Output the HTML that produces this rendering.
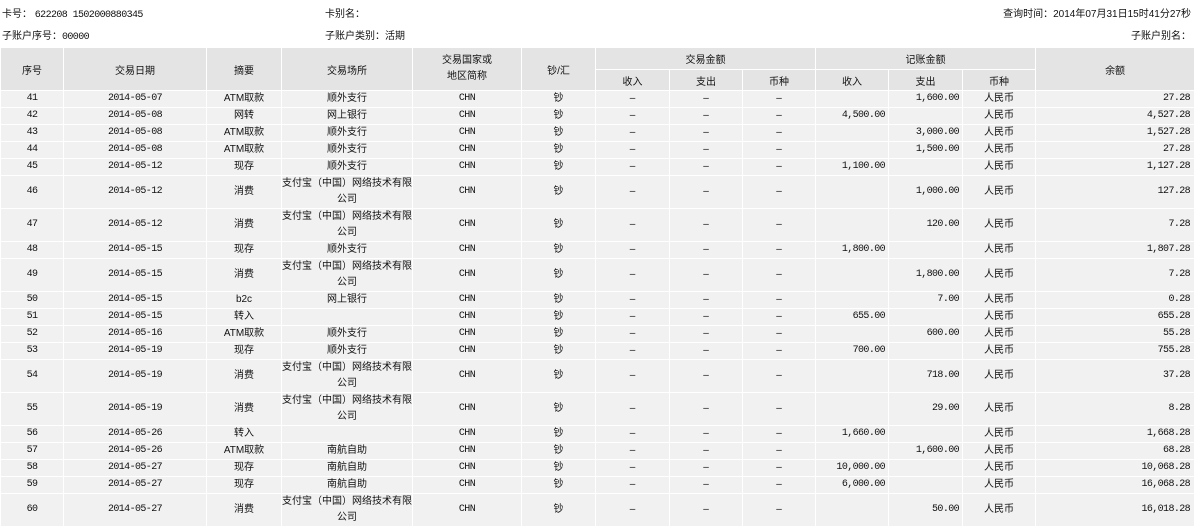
<!DOCTYPE html>
<html><head><meta charset="utf-8"><style>
body{margin:0;background:#fff;width:1194px;height:525px;overflow:hidden;font-family:"Liberation Sans","Noto Sans CJK SC","WenQuanYi Zen Hei",sans-serif;font-size:10px;color:#111}
.top{position:absolute;font-size:10px;white-space:nowrap}
table{position:absolute;left:0;top:47px;border-collapse:collapse;table-layout:fixed;width:1194px}
td,th{border:1px solid #fff;padding:0;text-align:center;font-weight:normal;overflow:hidden;white-space:nowrap}
th{background:#e4e4e4;font-size:10px}
td{background:#f1f1f1;height:16px;line-height:16px}
td.t{height:32px;line-height:16px}
.m{font-family:"Liberation Mono",monospace;font-size:10px;letter-spacing:-0.6px}
.r{text-align:right;padding-right:3px}
.rr{text-align:right;padding-right:4px}
</style></head><body>
<div class="top" style="left:2px;top:5px">卡号： <span class="m">622208 1502000880345</span></div>
<div class="top" style="left:325px;top:5px">卡别名：</div>
<div class="top" style="right:3px;top:5px">查询时间：2014年07月31日15时41分27秒</div>
<div class="top" style="left:2px;top:27px">子账户序号：<span class="m">00000</span></div>
<div class="top" style="left:325px;top:27px">子账户类别：活期</div>
<div class="top" style="right:3px;top:27px">子账户别名：</div>
<table>
<colgroup><col style="width:63px"><col style="width:143px"><col style="width:75px"><col style="width:131px"><col style="width:109px"><col style="width:74px"><col style="width:74px"><col style="width:73px"><col style="width:73px"><col style="width:73px"><col style="width:74px"><col style="width:73px"><col style="width:159px"></colgroup>
<tr style="height:22px"><th rowspan="2">序号</th><th rowspan="2">交易日期</th><th rowspan="2">摘要</th><th rowspan="2">交易场所</th><th rowspan="2" style="line-height:16px">交易国家或<br>地区简称</th><th rowspan="2">钞/汇</th><th colspan="3">交易金额</th><th colspan="3">记账金额</th><th rowspan="2">余额</th></tr>
<tr style="height:21px"><th>收入</th><th>支出</th><th>币种</th><th>收入</th><th>支出</th><th>币种</th></tr>
<tbody id="b"></tbody>
</table>
<script>
var d=[
[41,"07","ATM取款","顺外支行","","1,600.00","27.28"],
[42,"08","网转","网上银行","4,500.00","","4,527.28"],
[43,"08","ATM取款","顺外支行","","3,000.00","1,527.28"],
[44,"08","ATM取款","顺外支行","","1,500.00","27.28"],
[45,"12","现存","顺外支行","1,100.00","","1,127.28"],
[46,"12","消费","Z","","1,000.00","127.28"],
[47,"12","消费","Z","","120.00","7.28"],
[48,"15","现存","顺外支行","1,800.00","","1,807.28"],
[49,"15","消费","Z","","1,800.00","7.28"],
[50,"15","b2c","网上银行","","7.00","0.28"],
[51,"15","转入","","655.00","","655.28"],
[52,"16","ATM取款","顺外支行","","600.00","55.28"],
[53,"19","现存","顺外支行","700.00","","755.28"],
[54,"19","消费","Z","","718.00","37.28"],
[55,"19","消费","Z","","29.00","8.28"],
[56,"26","转入","","1,660.00","","1,668.28"],
[57,"26","ATM取款","南航自助","","1,600.00","68.28"],
[58,"27","现存","南航自助","10,000.00","","10,068.28"],
[59,"27","现存","南航自助","6,000.00","","16,068.28"],
[60,"27","消费","Z","","50.00","16,018.28"]];
var h="";
d.forEach(function(r){var t=r[3]=="Z";var T=t?" t":"";var p=t?"支付宝（中国）网络技术有限<br>公司":r[3];
function c(cls,x){return "<td class='"+cls+T+"'>"+x+"</td>";}
h+="<tr>"+c("m",r[0])+c("m","2014-05-"+r[1])+c("",r[2])+c("",p)+c("m","CHN")+c("","钞")+c("","–")+c("","–")+c("","–")+c("m r",r[4])+c("m r",r[5])+c("","人民币")+c("m rr",r[6])+"</tr>";});
document.getElementById("b").innerHTML=h;
</script>
</body></html>
